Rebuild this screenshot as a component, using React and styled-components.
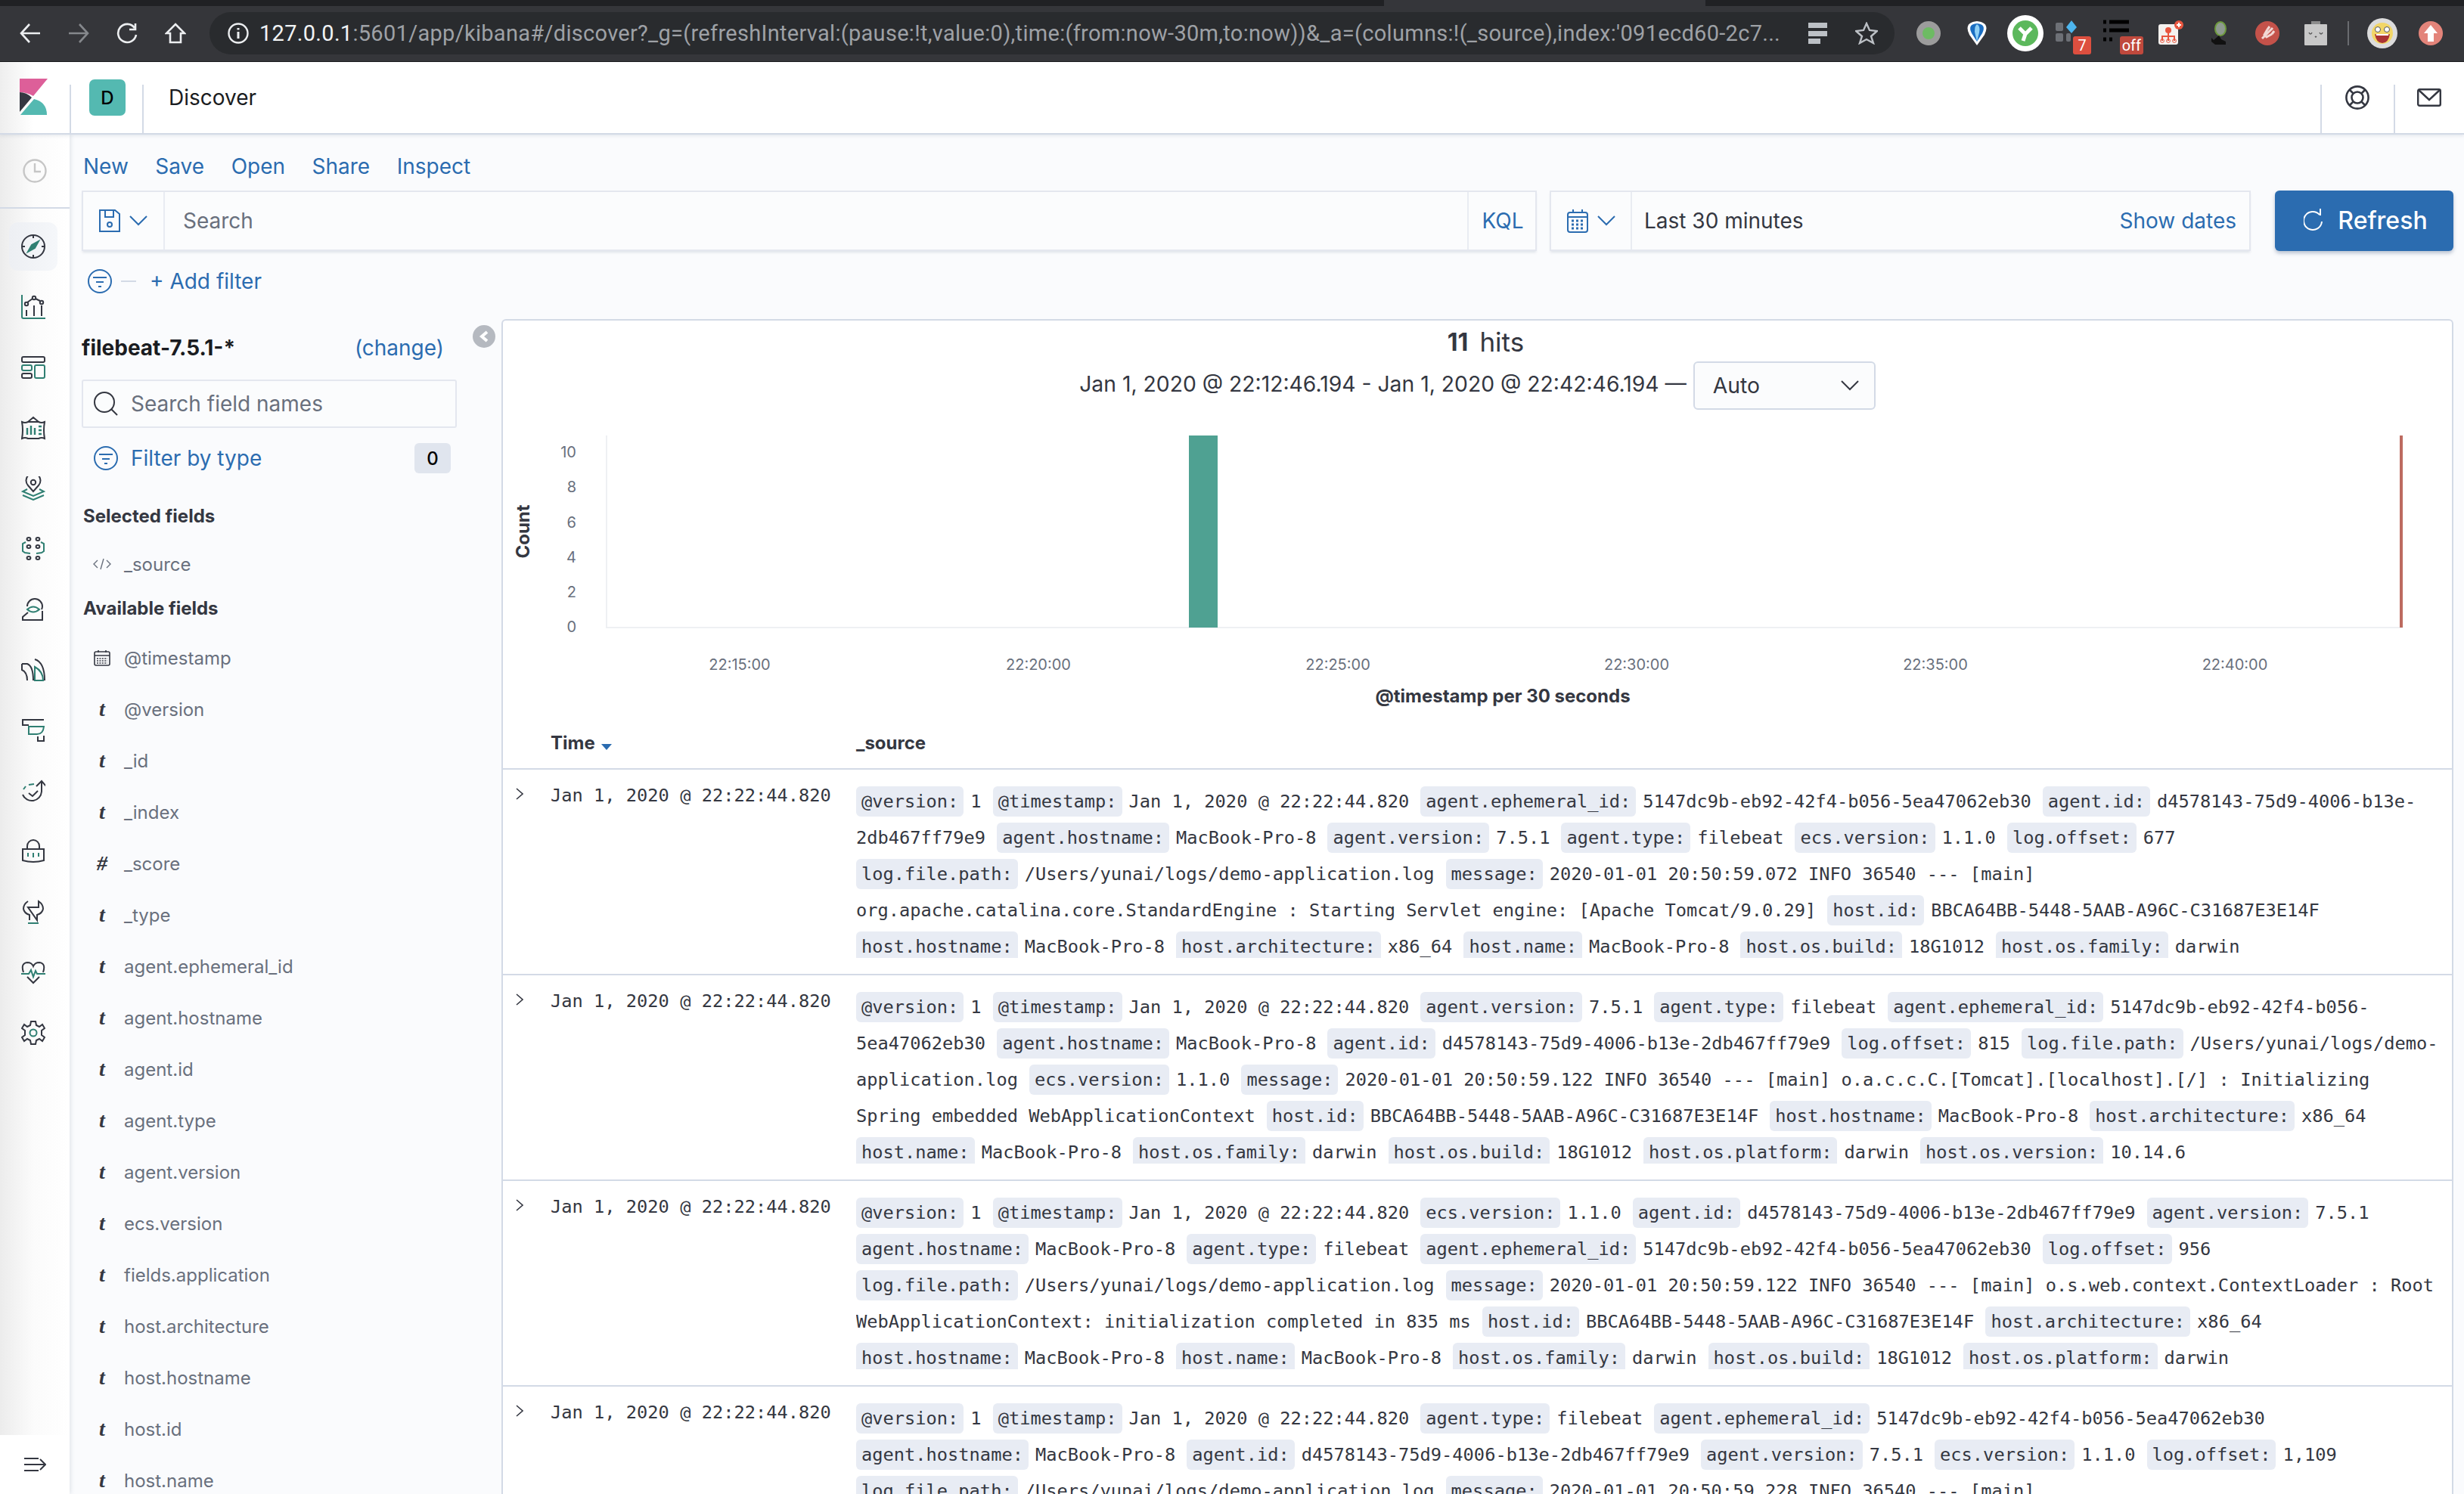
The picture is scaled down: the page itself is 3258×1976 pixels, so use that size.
import React from "react";
import styled, { createGlobalStyle } from "styled-components";

const DARK = "#343741";
const TEAL = "#2f7f72";
const BLUE = "#2b6cb0";
const GREY = "#69707d";
const LINE = "#d3dae6";

const GlobalStyle = createGlobalStyle`
  html, body {
    margin: 0;
    padding: 0;
    background: #fafbfd;
    overflow: hidden;
  }
  * {
    box-sizing: border-box;
  }
`;

const Page = styled.div`
  width: 3258px;
  height: 1976px;
  display: flex;
  flex-direction: column;
  overflow: hidden;
  font-family: Inter, "Noto Sans", sans-serif;
  color: ${DARK};
`;

/* browser chrome */
const Browser = styled.div`
  height: 82px;
  flex: none;
  background: #35363a;
  border-bottom: 1px solid #17181a;
  display: flex;
  flex-direction: column;
`;

const TabStrip = styled.div`
  height: 8px;
  display: flex;
  margin-bottom: 8px;
`;

const TabPiece = styled.div`
  width: ${(props) => props.$width || "auto"};
  flex: ${(props) => (props.$width ? "none" : 1)};
  background: ${(props) => (props.$active ? "#35363a" : "#202124")};
`;

const BrowserRow = styled.div`
  height: 56px;
  display: flex;
  align-items: center;
  padding-left: 8px;
`;

const Slot = styled.div`
  width: 64px;
  height: 56px;
  flex: none;
  display: flex;
  align-items: center;
  justify-content: center;
  position: relative;
`;

const AddressBar = styled.div`
  width: 2228px;
  height: 56px;
  margin-left: 13px;
  margin-right: 13px;
  flex: none;
  border-radius: 28px;
  background: #292b2e;
  display: flex;
  align-items: center;
  padding-left: 24px;
  padding-right: 22px;
  font-family: Roboto, sans-serif;
  font-size: 29px;
`;

const Url = styled.div`
  flex: 1;
  margin-left: 14px;
  white-space: nowrap;
  overflow: hidden;
  color: #9ea1a6;
  letter-spacing: 0.3px;
  b {
    font-weight: 400;
    color: #f1f3f4;
  }
`;

const ReaderIcon = styled.svg`
  margin-right: 36px;
  flex: none;
`;

const BarDivider = styled.div`
  width: 2px;
  height: 32px;
  margin: 0 12px 0 10px;
  background: #6a6c70;
  flex: none;
`;

const ExtBadge = styled.span`
  position: absolute;
  right: ${(props) => props.$right}px;
  bottom: 0;
  height: 24px;
  min-width: 24px;
  padding: 0 3px;
  border-radius: 3px;
  background: ${(props) => props.$bg};
  color: #fff;
  font-family: Roboto, sans-serif;
  font-size: 20px;
  line-height: 24px;
  text-align: center;
`;

const BadgedIcon = styled.svg`
  margin-right: ${(props) => props.$right}px;
  margin-bottom: ${(props) => props.$bottom}px;
`;

/* kibana header */
const Header = styled.header`
  height: 96px;
  flex: none;
  background: #fff;
  border-bottom: 2px solid ${LINE};
  box-shadow: 0 2px 4px rgba(152, 162, 179, 0.2);
  display: flex;
  position: relative;
  z-index: 2;
`;

const HeaderCell = styled.div`
  width: ${(props) => props.$width}px;
  flex: none;
  position: relative;
  display: flex;
  align-items: center;
  justify-content: center;
  &::after {
    content: "";
    position: absolute;
    ${(props) => (props.$lineLeft ? "left: 0;" : "right: 0;")}
    bottom: 0;
    height: 64px;
    width: 2px;
    background: ${LINE};
  }
`;

const LogoCell = styled(HeaderCell)`
  background: linear-gradient(90deg, #eeeeee, #ffffff 44px);
  padding: 0 5px 2px 0;
`;

const Avatar = styled.div`
  width: 48px;
  height: 48px;
  border-radius: 7px;
  background: #54b9b1;
  color: #000;
  font-size: 24px;
  font-weight: 500;
  display: flex;
  align-items: center;
  justify-content: center;
`;

const Crumb = styled.div`
  font-size: 28px;
  color: #1a1c21;
  margin-left: 33px;
  line-height: 94px;
  flex: 1;
`;

/* app frame */
const Frame = styled.div`
  flex: 1;
  display: flex;
  min-height: 0;
`;

const Nav = styled.nav`
  width: 92px;
  flex: none;
  display: flex;
  flex-direction: column;
  background: linear-gradient(90deg, #ececec, #fbfbfb 44px, #ffffff);
  box-shadow: 2px 0 5px rgba(152, 162, 179, 0.22);
  position: relative;
  z-index: 1;
`;

const NavRecent = styled.div`
  height: 98px;
  flex: none;
  border-bottom: 2px solid ${LINE};
  display: flex;
  align-items: center;
  justify-content: center;
  margin-bottom: 18px;
`;

const NavItem = styled.div`
  height: 64px;
  width: 64px;
  margin: 0 0 16px 12px;
  flex: none;
  display: flex;
  align-items: center;
  justify-content: center;
  border-radius: 12px;
  background: ${(props) => (props.$active ? "linear-gradient(90deg, #edeff3, #f5f7fa)" : "none")};
`;

const NavFoot = styled.div`
  margin-top: auto;
  height: 78px;
  flex: none;
  background: #fff;
  display: flex;
  align-items: center;
  justify-content: center;
`;

const Content = styled.main`
  flex: 1;
  min-width: 0;
  padding: 0 14px 0 16px;
  display: flex;
  flex-direction: column;
`;

const TopMenu = styled.div`
  display: flex;
  gap: 35.5px;
  padding-top: 24px;
  margin-bottom: 14px;
  padding-left: 2px;
  flex: none;
`;

const MenuLink = styled.a`
  font-size: 28px;
  line-height: 36px;
  color: ${BLUE};
`;

const QueryRow = styled.div`
  height: 80px;
  flex: none;
  display: flex;
`;

const Field = styled.div`
  height: 80px;
  background: #fbfcfd;
  border: 2px solid #e4e7ef;
  box-shadow: 0 3px 3px -1px rgba(152, 162, 179, 0.25);
  display: flex;
  align-items: center;
  width: ${(props) => props.$width}px;
  flex: none;
  margin-right: ${(props) => props.$gap || 0}px;
  font-size: 28px;
`;

const Prepend = styled.div`
  width: ${(props) => props.$width}px;
  height: 100%;
  flex: none;
  display: flex;
  align-items: center;
  justify-content: center;
  gap: 12px;
  border-right: 2px solid #e9ecf2;
`;

const Placeholder = styled.div`
  flex: 1;
  color: ${GREY};
  padding-left: ${(props) => props.$pad}px;
`;

const KqlTag = styled.div`
  width: 90px;
  height: 100%;
  flex: none;
  border-left: 2px solid #e9ecf2;
  padding-left: 2px;
  display: flex;
  align-items: center;
  justify-content: center;
  color: ${BLUE};
`;

const RangeText = styled.div`
  flex: 1;
  padding-left: 16px;
`;

const ShowDates = styled.a`
  color: ${BLUE};
  margin-right: 17px;
`;

const RefreshButton = styled.button`
  width: 236px;
  height: 80px;
  flex: none;
  border: 0;
  border-radius: 6px;
  background: ${BLUE};
  box-shadow: 0 3px 5px rgba(65, 90, 130, 0.35);
  color: #fff;
  font-family: inherit;
  font-size: 32px;
  font-weight: 500;
  display: flex;
  align-items: center;
  justify-content: center;
  gap: 19px;
  padding: 0 0 2px 4px;
`;

const FilterRow = styled.div`
  height: 80px;
  flex: none;
  display: flex;
  align-items: center;
  padding-left: 8px;
`;

const Dash = styled.div`
  width: 20px;
  height: 2px;
  margin: 0 18px 0 12px;
  background: ${LINE};
`;

const DiscoverBody = styled.div`
  flex: 1;
  min-height: 0;
  display: flex;
`;

/* field sidebar */
const Sidebar = styled.aside`
  width: 555px;
  flex: none;
  position: relative;
`;

const CollapseDot = styled.div`
  position: absolute;
  left: 517px;
  top: 18px;
  width: 30px;
  height: 30px;
  border-radius: 50%;
  background: #b5b9c0;
  display: flex;
  align-items: center;
  justify-content: center;
`;

const IndexRow = styled.div`
  width: 479px;
  height: 40px;
  margin-top: 28px;
  display: flex;
  justify-content: space-between;
  align-items: center;
  font-size: 28px;
`;

const IndexName = styled.div`
  font-weight: 700;
  color: #1a1c21;
`;

const ChangeLink = styled.a`
  color: ${BLUE};
`;

const FieldSearch = styled.div`
  width: 496px;
  height: 64px;
  margin-top: 22px;
  background: #fbfcfd;
  border: 2px solid #e4e7ef;
  border-radius: 3px;
  display: flex;
  align-items: center;
  padding-left: 14px;
  gap: 17px;
  font-size: 28px;
  color: ${GREY};
`;

const FilterType = styled.div`
  width: 488px;
  height: 40px;
  margin-top: 20px;
  padding-left: 16px;
  display: flex;
  align-items: center;
  gap: 17px;
  font-size: 28px;
  color: ${BLUE};
`;

const CountBadge = styled.div`
  margin-left: auto;
  width: 48px;
  height: 40px;
  border-radius: 6px;
  background: #e0e5ee;
  color: #000;
  font-size: 24px;
  font-weight: 500;
  display: flex;
  align-items: center;
  justify-content: center;
`;

const SectionTitle = styled.h3`
  height: 34px;
  margin: ${(props) => props.$top}px 0 ${(props) => props.$bottom}px 2px;
  font-size: 24px;
  line-height: 34px;
  font-weight: 700;
  color: ${DARK};
`;

const FieldRow = styled.div`
  height: 68px;
  display: flex;
  align-items: center;
  font-size: 24px;
  color: ${GREY};
`;

const FieldType = styled.div`
  width: 56px;
  flex: none;
  display: flex;
  justify-content: center;
  padding-right: 2px;
  font-family: "Liberation Serif", serif;
  font-size: 28px;
  font-weight: 700;
  font-style: italic;
  color: ${DARK};
`;

/* results panel */
const Panel = styled.section`
  flex: 1;
  min-width: 0;
  margin-top: 10px;
  background: #fff;
  border: 2px solid ${LINE};
  border-bottom: 0;
  border-radius: 6px 6px 0 0;
  overflow: hidden;
`;

const Hits = styled.div`
  height: 56px;
  display: flex;
  align-items: center;
  justify-content: center;
  gap: 15px;
  font-size: 35px;
  padding-left: 22px;
  b {
    font-weight: 700;
    font-size: 32px;
  }
`;

const RangeRow = styled.div`
  height: 64px;
  margin-top: -2px;
  display: flex;
  align-items: center;
  justify-content: center;
  gap: 9px;
  font-size: 28.3px;
`;

const RangeLabel = styled.div`
  padding-bottom: 4px;
`;

const IntervalSelect = styled.div`
  width: 241px;
  height: 64px;
  border: 2px solid ${LINE};
  border-radius: 6px;
  background: #fbfcfd;
  display: flex;
  align-items: center;
  justify-content: space-between;
  padding: 0 20px 0 24px;
`;

const ChartSvg = styled.svg`
  display: block;
  width: 2576px;
  height: 408px;
  font-family: Inter, sans-serif;
`;

const TableHead = styled.div`
  height: 68px;
  border-bottom: 2px solid ${LINE};
  display: grid;
  grid-template-columns: 63px 404px 1fr;
  align-items: center;
  font-size: 24px;
  font-weight: 700;
  padding-bottom: 2px;
`;

const SortMark = styled.span`
  display: inline-block;
  margin-left: 8px;
  border-left: 7px solid transparent;
  border-right: 7px solid transparent;
  border-top: 8px solid ${BLUE};
  vertical-align: -1px;
`;

const DocRow = styled.div`
  height: 272px;
  flex: none;
  border-bottom: 2px solid ${LINE};
  display: grid;
  grid-template-columns: 63px 404px 1fr;
  font-family: "DejaVu Sans Mono", monospace;
  font-size: 23.7px;
  color: ${DARK};
  padding-top: 17px;
`;

const Expander = styled.div`
  height: 34px;
  display: flex;
  align-items: center;
  padding-left: 17px;
  margin-top: -2px;
`;

const DocTime = styled.div`
  line-height: 34px;
  white-space: pre;
`;

const DocSource = styled.div`
  max-height: 232px;
  padding-top: 1px;
  overflow: hidden;
`;

const SourceLine = styled.div`
  height: 48px;
  display: flex;
  align-items: center;
  white-space: pre;
`;

const Key = styled.span`
  display: inline-block;
  height: 40px;
  line-height: 40px;
  padding: 0 7px;
  margin-right: 9px;
  border-radius: 6px;
  background: #e8ecf4;
`;

const Val = styled.span`
  margin-right: 15px;
`;

/* icons */
const Ico = ({ size = 32, w, h, box, children, ...rest }) => (
  <svg
    width={w || size}
    height={h || size}
    viewBox={box || `0 0 ${w || size} ${h || size}`}
    fill="none"
    strokeWidth="2"
    {...rest}
  >
    {children}
  </svg>
);

const Chevron = ({ color = DARK }) => (
  <Ico w={24} h={14} stroke={color}>
    <path d="M1 1 L12 12 L23 1" />
  </Ico>
);

const FilterIcon = () => (
  <Ico stroke={BLUE}>
    <circle cx="16" cy="16" r="15" />
    <path d="M7 11 H25 M11 17 H21 M14 23 H18" />
  </Ico>
);

const NAV_ICONS = [
  // discover
  <Ico key="discover" stroke={DARK}>
    <circle cx="16" cy="16" r="15" />
    <path d="M16 1 V5 M16 27 V31 M1 16 H5 M27 16 H31" />
    <path d="M23 9 L18 18 L9 23 L14 14 Z" stroke={TEAL} fill={TEAL} />
  </Ico>,
  // visualize
  <Ico key="visualize" stroke={DARK}>
    <path d="M1 0 V29 Q1 31 3 31 H32" stroke={TEAL} />
    <path d="M7 20 V28 M17 14 V28 M27 14 V28 M8 10 L15 5 M19 5 L25 8" />
    <circle cx="7" cy="12" r="2.2" />
    <circle cx="17" cy="4" r="2.2" />
    <circle cx="27" cy="10" r="2.2" />
  </Ico>,
  // dashboard
  <Ico key="dashboard" h={32} stroke={DARK}>
    <rect x="1" y="2" width="30" height="7" rx="2" />
    <rect x="1" y="13" width="13" height="7" rx="2" stroke={TEAL} />
    <rect x="1" y="24" width="13" height="6" rx="2" />
    <rect x="18" y="13" width="13" height="17" rx="2" stroke={TEAL} />
  </Ico>,
  // canvas
  <Ico key="canvas" stroke={DARK}>
    <path d="M9 8 L16 2 L23 8 M1 8 Q5 10 9 8 H23 Q27 10 31 8 Q29 19 31 30 Q27 28 23 30 H9 Q5 28 1 30 Q3 19 1 8 Z" />
    <path d="M8 16 V25 M13 13 V25 M18 16 V25 M23 14 H27 M23 19 H27 M23 24 H27" stroke={TEAL} strokeWidth="2.4" />
  </Ico>,
  // maps
  <Ico key="maps" stroke={DARK}>
    <path d="M16 20 L9 12 A9.5 9.5 0 1 1 23 12 Z" />
    <circle cx="16" cy="8" r="3.2" />
    <path d="M8 17 L2 20 L16 26 L30 20 L24 17 M2 25 L16 31 L30 25" stroke={TEAL} />
  </Ico>,
  // machine learning
  <Ico key="ml" stroke={DARK}>
    <ellipse cx="10" cy="3" rx="2.4" ry="2" />
    <ellipse cx="22" cy="3" rx="2.4" ry="2" />
    <ellipse cx="10" cy="13" rx="2.4" ry="2" />
    <ellipse cx="22" cy="13" rx="2.4" ry="2" />
    <ellipse cx="10" cy="28" rx="2.4" ry="2" />
    <ellipse cx="22" cy="28" rx="2.4" ry="2" />
    <path d="M6 7 L2 9 V19 L5 21 L12 22 M26 7 L30 9 V19 L27 21 L20 22" stroke={TEAL} />
  </Ico>,
  // infrastructure
  <Ico key="infra" stroke={DARK}>
    <path d="M8 12 A10 10 0 0 1 28 12 Q28 14 27 16 M28 18 V30 H2 V26 L9 20" />
    <path d="M8 16 Q16 9 24 16 Q16 23 8 16 Z" stroke={TEAL} />
  </Ico>,
  // apm
  <Ico key="apm" stroke={DARK}>
    <path d="M1 8 H8 Q16 11 16 30 M1 8 V16 Q8 19 8 30 M18 2 Q31 6 31 30" />
    <path d="M18 12 Q29 18 29 30 H18 Z" stroke={TEAL} />
  </Ico>,
  // uptime
  <Ico key="uptime" stroke={DARK}>
    <path d="M30 2 H2 V9 H10 M22 24 V30 H30 V23" />
    <path d="M10 11 H30 Q29 21 21 21 H10 Z" stroke={TEAL} />
  </Ico>,
  // siem
  <Ico key="siem" stroke={DARK}>
    <path d="M27 4 V17 A13 13 0 0 1 2 21 M20 10 L27 3 L33 10" />
    <path d="M10 19 L15 23 L22 16" />
    <path d="M3 14 L6 10 M10 8 L17 7" stroke={TEAL} />
  </Ico>,
  // security
  <Ico key="security" stroke={DARK}>
    <path d="M8 12 V9 A8 8 0 0 1 24 9 V12" />
    <path d="M2 13 H30 V28 Q16 32 2 28 Z" />
    <path d="M9 18 V23 M16 18 V24 M23 18 V23" stroke={TEAL} />
  </Ico>,
  // dev tools
  <Ico key="tools" stroke={DARK}>
    <path d="M9 2 Q3 6 3 12 Q4 18 11 20 V27 M21 27 V20 Q28 18 29 12 Q29 6 23 2 V10 H9 Z" />
    <path d="M9 31 H23" stroke={TEAL} />
  </Ico>,
  // monitoring
  <Ico key="monitoring" stroke={DARK}>
    <path d="M3 16 Q-1 4 8 3 Q14 3 16 8 Q18 3 24 3 Q33 4 29 16 M8 22 L16 30 L24 22" />
    <path d="M0 18 H10 L13 13 L16 22 L19 14 L21 18 H32" stroke={TEAL} />
  </Ico>,
  // settings
  <Ico key="settings" stroke={DARK}>
    <path d="M13 1 H19 L20 6 L24 8 L28 5 L31 10 L27 13 V19 L31 22 L28 27 L24 24 L20 26 L19 31 H13 L12 26 L8 24 L4 27 L1 22 L5 19 V13 L1 10 L4 5 L8 8 L12 6 Z" />
    <circle cx="16" cy="16" r="4.5" stroke={TEAL} />
  </Ico>,
];

const Logo = () => (
  <svg width="37" height="48" viewBox="0 0 37 48">
    <path d="M0 0 H37 L18 23 Q9 18 0 18 Z" fill="#dd5f99" />
    <path d="M0 18 Q9 18 16 25 L0 44 Z" fill="#343741" />
    <path d="M1 48 L19 27 Q36 31 36 48 Z" fill="#54b9b1" />
  </svg>
);

const Extensions = () => (
  <>
    <Slot>
      <svg width="34" height="34"><circle cx="17" cy="17" r="16" fill="#9c9c9c" /><circle cx="17" cy="17" r="8" fill="#6dbb63" /></svg>
    </Slot>
    <Slot>
      <svg width="32" height="32" viewBox="0 0 32 32">
        <path d="M16 32 L6 18 Q-2 2 16 0 Q34 2 26 18 Z" fill="#fff" />
        <path d="M16 27 L9 16 Q3 4 16 3 Q29 4 23 16 Z" fill="#1a6ec2" />
        <path d="M16 27 L13 14 Q13 6 16 4 Q21 7 19 15 Z" fill="#8fd0f5" />
      </svg>
    </Slot>
    <Slot>
      <svg width="48" height="48"><circle cx="24" cy="24" r="24" fill="#fff" /><circle cx="24" cy="24" r="17" fill="#5cb85c" /><path d="M16 17 L24 25 L21 34 M32 17 L24 25" stroke="#fff" strokeWidth="5" fill="none" /></svg>
    </Slot>
    <Slot>
      <BadgedIcon width="32" height="32" $right={16} $bottom={4}>
        <rect x="0" y="4" width="10" height="11" rx="2" fill="#6d7076" />
        <rect x="0" y="18" width="10" height="11" rx="2" fill="#6d7076" />
        <rect x="14" y="18" width="6" height="11" rx="2" fill="#6d7076" />
        <path d="M21 1 L28 10 L21 18 L14 10 Z" fill="#4db5ee" />
      </BadgedIcon>
      <ExtBadge $right={9} $bg="#dd4f3f">7</ExtBadge>
    </Slot>
    <Slot>
      <BadgedIcon width="36" height="30" $right={14} $bottom={6}>
        <path d="M0 3 H4 M8 3 H34 M0 14 H4 M8 14 H34 M0 26 H4 M8 26 H12" stroke="#000" strokeWidth="5" />
      </BadgedIcon>
      <ExtBadge $right={4} $bg="#c0493d">off</ExtBadge>
    </Slot>
    <Slot>
      <svg width="34" height="34">
        <rect x="1" y="5" width="26" height="27" rx="3" fill="#f4f1ee" />
        <circle cx="28" cy="6" r="6" fill="#e8563f" />
        <path d="M25 6 H31 M28 3 V9" stroke="#fff" strokeWidth="2" />
        <circle cx="14" cy="13" r="4" fill="#e8563f" />
        <path d="M14 15 V21 M6 27 V21 H22 V27 M14 21 V27" stroke="#e8563f" strokeWidth="2" fill="none" />
        <circle cx="6" cy="27" r="2.4" stroke="#e8563f" fill="none" />
        <circle cx="14" cy="27" r="2.4" stroke="#e8563f" fill="none" />
        <circle cx="22" cy="27" r="2.4" stroke="#e8563f" fill="none" />
      </svg>
    </Slot>
    <Slot>
      <svg width="26" height="32">
        <ellipse cx="15" cy="10" rx="7" ry="9" fill="#8e9a90" stroke="#6d9a3c" strokeWidth="2" />
        <path d="M13 19 L6 25 L3 22 V27 L8 31 H22 V27 L16 24 Z" fill="#111" />
      </svg>
    </Slot>
    <Slot>
      <svg width="32" height="32"><circle cx="16" cy="16" r="16" fill="#c4524a" /><path d="M9 23 L23 9 M16 11 L12 18 L15 21 L22 17 M19 7 L16 11 M25 13 L22 17" stroke="#f2d8d5" strokeWidth="3" fill="none" /></svg>
    </Slot>
    <Slot>
      <svg width="30" height="32">
        <rect x="9" y="0" width="12" height="5" fill="#8c8c8c" />
        <rect x="0" y="4" width="30" height="28" rx="1" fill="#c8c8c8" />
        <path d="M6 15 Q8 19 10 15 M20 15 Q22 19 24 15 M14 20 L15 21 L16 20" stroke="#555" strokeWidth="1.5" fill="none" />
      </svg>
    </Slot>
  </>
);

const Smiley = () => (
  <svg width="40" height="40">
    <circle cx="20" cy="20" r="20" fill="#dcdcdc" />
    <circle cx="20" cy="20" r="14" fill="#f2d667" />
    <circle cx="14" cy="15" r="3.5" fill="#fff" stroke="#555" />
    <circle cx="26" cy="15" r="3.5" fill="#fff" stroke="#555" />
    <path d="M10 21 Q20 24 30 21 Q28 33 20 33 Q12 33 10 21 Z" fill="#a33" />
    <path d="M12 22 H28" stroke="#fff" strokeWidth="2" />
  </svg>
);

const TIMESTAMP = ["@timestamp", "Jan 1, 2020 @ 22:22:44.820"];
const VERSION = ["@version", "1"];
const EPH = ["agent.ephemeral_id", "5147dc9b-eb92-42f4-b056-5ea47062eb30"];
const AGENT_ID = ["agent.id", "d4578143-75d9-4006-b13e-2db467ff79e9"];
const AGENT_HOST = ["agent.hostname", "MacBook-Pro-8"];
const AGENT_VER = ["agent.version", "7.5.1"];
const AGENT_TYPE = ["agent.type", "filebeat"];
const ECS = ["ecs.version", "1.1.0"];
const LOG_PATH = ["log.file.path", "/Users/yunai/logs/demo-application.log"];
const HOST_ID = ["host.id", "BBCA64BB-5448-5AAB-A96C-C31687E3E14F"];
const HOST_HOST = ["host.hostname", "MacBook-Pro-8"];
const HOST_ARCH = ["host.architecture", "x86_64"];
const HOST_NAME = ["host.name", "MacBook-Pro-8"];
const OS_BUILD = ["host.os.build", "18G1012"];
const OS_FAMILY = ["host.os.family", "darwin"];
const OS_PLATFORM = ["host.os.platform", "darwin"];

const DOCS = [
  [
    [VERSION, TIMESTAMP, EPH, ["agent.id", "d4578143-75d9-4006-b13e-"]],
    [[null, "2db467ff79e9"], AGENT_HOST, AGENT_VER, AGENT_TYPE, ECS, ["log.offset", "677"]],
    [LOG_PATH, ["message", "2020-01-01 20:50:59.072 INFO 36540 --- [main]"]],
    [[null, "org.apache.catalina.core.StandardEngine : Starting Servlet engine: [Apache Tomcat/9.0.29]"], HOST_ID],
    [HOST_HOST, HOST_ARCH, HOST_NAME, OS_BUILD, OS_FAMILY],
  ],
  [
    [VERSION, TIMESTAMP, AGENT_VER, AGENT_TYPE, ["agent.ephemeral_id", "5147dc9b-eb92-42f4-b056-"]],
    [[null, "5ea47062eb30"], AGENT_HOST, AGENT_ID, ["log.offset", "815"], ["log.file.path", "/Users/yunai/logs/demo-"]],
    [[null, "application.log"], ECS, ["message", "2020-01-01 20:50:59.122 INFO 36540 --- [main] o.a.c.c.C.[Tomcat].[localhost].[/] : Initializing"]],
    [[null, "Spring embedded WebApplicationContext"], HOST_ID, HOST_HOST, HOST_ARCH],
    [HOST_NAME, OS_FAMILY, OS_BUILD, OS_PLATFORM, ["host.os.version", "10.14.6"]],
  ],
  [
    [VERSION, TIMESTAMP, ECS, AGENT_ID, AGENT_VER],
    [AGENT_HOST, AGENT_TYPE, EPH, ["log.offset", "956"]],
    [LOG_PATH, ["message", "2020-01-01 20:50:59.122 INFO 36540 --- [main] o.s.web.context.ContextLoader : Root"]],
    [[null, "WebApplicationContext: initialization completed in 835 ms"], HOST_ID, HOST_ARCH],
    [HOST_HOST, HOST_NAME, OS_FAMILY, OS_BUILD, OS_PLATFORM],
  ],
  [
    [VERSION, TIMESTAMP, AGENT_TYPE, EPH],
    [AGENT_HOST, AGENT_ID, AGENT_VER, ECS, ["log.offset", "1,109"]],
    [LOG_PATH, ["message", "2020-01-01 20:50:59.228 INFO 36540 --- [main]"]],
  ],
];

const FIELDS = [
  ["t", "@version"],
  ["t", "_id"],
  ["t", "_index"],
  ["#", "_score"],
  ["t", "_type"],
  ["t", "agent.ephemeral_id"],
  ["t", "agent.hostname"],
  ["t", "agent.id"],
  ["t", "agent.type"],
  ["t", "agent.version"],
  ["t", "ecs.version"],
  ["t", "fields.application"],
  ["t", "host.architecture"],
  ["t", "host.hostname"],
  ["t", "host.id"],
  ["t", "host.name"],
];

const YTICKS = [["10", 598], ["8", 644], ["6", 691], ["4", 737], ["2", 783], ["0", 829]];
const XTICKS = [["22:15:00", 978], ["22:20:00", 1373], ["22:25:00", 1769], ["22:30:00", 2164], ["22:35:00", 2559], ["22:40:00", 2955]];

const Chart = () => (
  <ChartSvg viewBox="665 542 2576 408">
    <path d="M802 576 V830 H3177" stroke="#eef0f3" strokeWidth="2" fill="none" />
    <rect x="1572" y="576" width="38" height="254" fill="#4fa192" />
    <rect x="3173" y="576" width="4" height="254" fill="#bd6b60" />
    {YTICKS.map(([label, y]) => (
      <text key={label} x="762" y={y + 7} fontSize="20" textAnchor="end" fill={GREY}>{label}</text>
    ))}
    {XTICKS.map(([label, x]) => (
      <text key={label} x={x} y="886" fontSize="20" textAnchor="middle" fill={GREY}>{label}</text>
    ))}
    <text x="700" y="703" fontSize="24" fontWeight="700" fill={DARK} textAnchor="middle" transform="rotate(-90 700 703)">Count</text>
    <text x="1987" y="929" fontSize="24" fontWeight="700" fill={DARK} textAnchor="middle">@timestamp per 30 seconds</text>
  </ChartSvg>
);

const App = () => (
  <Page>
    <GlobalStyle />
    <Browser>
      <TabStrip>
        <TabPiece $width="1830px" />
        <TabPiece $width="425px" $active />
        <TabPiece />
      </TabStrip>
      <BrowserRow>
        <Slot>
          <Ico w={28} h={28} stroke="#eceef0" strokeWidth="2.6"><path d="M27 14 H2 M13 2 L2 14 L13 26" /></Ico>
        </Slot>
        <Slot>
          <Ico w={28} h={28} stroke="#85888c" strokeWidth="2.6"><path d="M1 14 H26 M15 2 L26 14 L15 26" /></Ico>
        </Slot>
        <Slot>
          <Ico w={28} h={28} stroke="#eceef0" strokeWidth="2.6"><path d="M24 7 A12 12 0 1 0 26 16 M25 1 V9 H17" /></Ico>
        </Slot>
        <Slot>
          <Ico w={28} h={28} stroke="#eceef0" strokeWidth="2.6"><path d="M14 2 L26 14 H21 V26 H7 V14 H2 Z" /></Ico>
        </Slot>
        <AddressBar>
          <Ico w={28} h={28} stroke="#eceef0" strokeWidth="2.4">
            <circle cx="14" cy="14" r="12.5" />
            <path d="M14 12 V21 M14 7 V9.5" strokeWidth="3" />
          </Ico>
          <Url>
            <b>127.0.0.1</b>:5601/app/kibana#/discover?_g=(refreshInterval:(pause:!t,value:0),time:(from:now-30m,to:now))&_a=(columns:!(_source),index:'091ecd60-2c7...
          </Url>
          <ReaderIcon width="26" height="28">
            <path d="M0 0 H25 V7 H0 Z M0 11 H25 V18 H0 Z M0 21 H16 V28 H0 Z" fill="#bcc0c5" />
          </ReaderIcon>
          <Ico w={30} h={30} stroke="#bcc0c5" strokeWidth="2.4">
            <path d="M15 2 L19 11 L29 12 L21 19 L24 28 L15 23 L6 28 L9 19 L1 12 L11 11 Z" />
          </Ico>
        </AddressBar>
        <Extensions />
        <BarDivider />
        <Slot><Smiley /></Slot>
        <Slot>
          <svg width="32" height="32"><circle cx="16" cy="16" r="16" fill="#e3847a" /><path d="M16 5 L25 16 H20 V27 H12 V16 H7 Z" fill="#fff" /></svg>
        </Slot>
      </BrowserRow>
    </Browser>

    <Header>
      <LogoCell $width={94}><Logo /></LogoCell>
      <HeaderCell $width={96}><Avatar>D</Avatar></HeaderCell>
      <Crumb>Discover</Crumb>
      <HeaderCell $width={97} $lineLeft>
        <Ico stroke={DARK} strokeWidth="2.6">
          <circle cx="16" cy="16" r="14.6" />
          <circle cx="16" cy="16" r="7.5" />
          <path d="M6 6 L11 11 M26 6 L21 11 M6 26 L11 21 M26 26 L21 21" />
        </Ico>
      </HeaderCell>
      <HeaderCell $width={93} $lineLeft>
        <Ico w={32} h={24} stroke={DARK} strokeWidth="2.4">
          <rect x="1.2" y="1.2" width="29.6" height="21.6" rx="2" />
          <path d="M2 2 L16 15 L30 2" />
        </Ico>
      </HeaderCell>
    </Header>

    <Frame>
      <Nav>
        <NavRecent>
          <Ico stroke="#c6c6c6" strokeWidth="2.4">
            <circle cx="16" cy="16" r="14.5" />
            <path d="M16 6 V17 H24" />
          </Ico>
        </NavRecent>
        {NAV_ICONS.map((icon, index) => (
          <NavItem key={index} $active={index === 0}>{icon}</NavItem>
        ))}
        <NavFoot>
          <Ico w={30} h={20} stroke={DARK}>
            <path d="M1 2 H20 M1 10 H29 M1 18 H20 M22 3 L29 10 L22 17" />
          </Ico>
        </NavFoot>
      </Nav>

      <Content>
        <TopMenu>
          <MenuLink>New</MenuLink>
          <MenuLink>Save</MenuLink>
          <MenuLink>Open</MenuLink>
          <MenuLink>Share</MenuLink>
          <MenuLink>Inspect</MenuLink>
        </TopMenu>

        <QueryRow>
          <Field $width={1924} $gap={17}>
            <Prepend $width={108}>
              <Ico w={28} h={30} stroke={BLUE}>
                <path d="M1 1 H21 L27 6 V29 H1 Z" />
                <path d="M8 1 V10 H19 V1" />
                <circle cx="14" cy="20" r="3" />
              </Ico>
              <Chevron color={BLUE} />
            </Prepend>
            <Placeholder $pad={24}>Search</Placeholder>
            <KqlTag>KQL</KqlTag>
          </Field>
          <Field $width={927} $gap={32}>
            <Prepend $width={107}>
              <Ico w={28} h={32} stroke={BLUE}>
                <rect x="1" y="5" width="26" height="26" rx="3" />
                <path d="M1 11 H27 M8 1 V6 M20 1 V6" />
                <path d="M6 16 H22 M6 21 H22 M6 26 H22" strokeWidth="3" strokeDasharray="3 3" />
              </Ico>
              <Chevron color={BLUE} />
            </Prepend>
            <RangeText>Last 30 minutes</RangeText>
            <ShowDates>Show dates</ShowDates>
          </Field>
          <RefreshButton>
            <Ico w={26} h={32} stroke="#fff">
              <path d="M21 9 A12 12 0 1 0 24 18 M22 1 V10" />
            </Ico>
            Refresh
          </RefreshButton>
        </QueryRow>

        <FilterRow>
          <FilterIcon />
          <Dash />
          <MenuLink>+ Add filter</MenuLink>
        </FilterRow>

        <DiscoverBody>
          <Sidebar>
            <CollapseDot>
              <svg width="14" height="16"><path d="M11 2 L4 8 L11 14" stroke="#fff" strokeWidth="4" fill="none" /></svg>
            </CollapseDot>
            <IndexRow>
              <IndexName>filebeat-7.5.1-*</IndexName>
              <ChangeLink>(change)</ChangeLink>
            </IndexRow>
            <FieldSearch>
              <Ico stroke={DARK}>
                <circle cx="14" cy="14" r="13" />
                <path d="M23 23 L31 31" />
              </Ico>
              Search field names
            </FieldSearch>
            <FilterType>
              <FilterIcon />
              Filter by type
              <CountBadge>0</CountBadge>
            </FilterType>
            <SectionTitle $top={40} $bottom={12}>Selected fields</SectionTitle>
            <FieldRow>
              <FieldType>
                <svg width="24" height="16"><path d="M6 3 L1 8 L6 13 M18 3 L23 8 L18 13 M14 1 L10 15" stroke={GREY} strokeWidth="1.4" fill="none" /></svg>
              </FieldType>
              _source
            </FieldRow>
            <SectionTitle $top={8} $bottom={14}>Available fields</SectionTitle>
            <FieldRow>
              <FieldType>
                <Ico w={22} h={22} stroke={DARK} strokeWidth="1.6">
                  <rect x="1" y="3" width="20" height="18" rx="2" />
                  <path d="M1 8 H21 M6 1 V4 M16 1 V4" />
                  <path d="M4 12 H18 M4 15 H18 M4 18 H18" strokeDasharray="2 1.4" strokeWidth="1.4" />
                </Ico>
              </FieldType>
              @timestamp
            </FieldRow>
            {FIELDS.map(([type, name]) => (
              <FieldRow key={name}>
                <FieldType>{type}</FieldType>
                {name}
              </FieldRow>
            ))}
          </Sidebar>

          <Panel>
            <Hits><b>11</b> hits</Hits>
            <RangeRow>
              <RangeLabel>Jan 1, 2020 @ 22:12:46.194 - Jan 1, 2020 @ 22:42:46.194 —</RangeLabel>
              <IntervalSelect>
                Auto
                <Chevron />
              </IntervalSelect>
            </RangeRow>
            <Chart />
            <TableHead>
              <span />
              <span>Time<SortMark /></span>
              <span>_source</span>
            </TableHead>
            {DOCS.map((lines, docIndex) => (
              <DocRow key={docIndex}>
                <Expander>
                  <svg width="10" height="16"><path d="M1 1 L9 8 L1 15" stroke={DARK} strokeWidth="1.6" fill="none" /></svg>
                </Expander>
                <DocTime>Jan 1, 2020 @ 22:22:44.820</DocTime>
                <DocSource>
                  {lines.map((pairs, lineIndex) => (
                    <SourceLine key={lineIndex}>
                      {pairs.map(([key, value], pairIndex) => (
                        <React.Fragment key={pairIndex}>
                          {key && <Key>{key}:</Key>}
                          <Val>{value}</Val>
                        </React.Fragment>
                      ))}
                    </SourceLine>
                  ))}
                </DocSource>
              </DocRow>
            ))}
          </Panel>
        </DiscoverBody>
      </Content>
    </Frame>
  </Page>
);

export default App;
